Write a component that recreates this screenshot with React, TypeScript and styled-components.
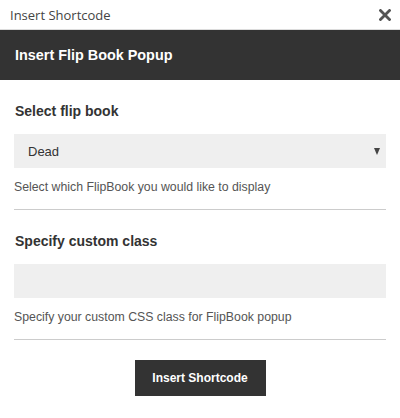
import { createGlobalStyle, styled } from 'styled-components'

const GlobalStyle = createGlobalStyle`
  html, body {
    margin: 0;
    padding: 0;
    background: #fff;
  }
  body {
    font-family: "Liberation Sans", Arial, sans-serif;
  }
`

export default function App() {
  return (
    <>
      <GlobalStyle />
      <Dialog>
        <TitleBar>
          <TitleText>Insert Shortcode</TitleText>
          <Close aria-label="Close">
            <svg width="12" height="12" viewBox="0 0 12 12">
              <path
                d="M1.5 1.5 L10.5 10.5 M10.5 1.5 L1.5 10.5"
                stroke="#555"
                strokeWidth="2.8"
                strokeLinecap="square"
              />
            </svg>
          </Close>
        </TitleBar>
        <Header>Insert Flip Book Popup</Header>
        <Body>
          <Field>
            <Label>Select flip book</Label>
            <SelectBox>
              <span>Dead</span>
              <Arrow />
            </SelectBox>
            <Help>Select which FlipBook you would like to display</Help>
          </Field>
          <Sep />
          <Field>
            <Label>Specify custom class</Label>
            <TextInput type="text" />
            <Help>Specify your custom CSS class for FlipBook popup</Help>
          </Field>
          <Sep $after={20} />
          <Actions>
            <Submit type="button">Insert Shortcode</Submit>
          </Actions>
        </Body>
      </Dialog>
    </>
  )
}

const Dialog = styled.div`
  width: 400px;
  height: 418px;
  background: #fff;
  display: flex;
  flex-direction: column;
`
const TitleBar = styled.div`
  height: 29px;
  border-bottom: 1px solid #dcdcdc;
  display: flex;
  align-items: center;
  justify-content: space-between;
  padding: 0 9px 0 10px;
`
const TitleText = styled.span`
  font-family: "Open Sans", "Noto Sans", sans-serif;
  font-size: 13px;
  color: #444;
`
const Close = styled.span`
  display: flex;
  align-items: center;
`
const Header = styled.div`
  height: 50px;
  background: #333;
  color: #fff;
  font-weight: bold;
  font-size: 14.4px;
  display: flex;
  align-items: center;
  padding: 0 15px;
`
const Body = styled.div`
  padding: 21px 14px 0;
  display: flex;
  flex-direction: column;
`
const Field = styled.div`
  display: flex;
  flex-direction: column;
`
const Label = styled.div`
  font-size: 14px;
  line-height: 20px;
  font-weight: bold;
  color: #333;
  padding-left: 1px;
  margin-bottom: 13px;
`
const SelectBox = styled.div`
  height: 34px;
  background: #efefef;
  display: flex;
  align-items: center;
  justify-content: space-between;
  padding: 0 6px 0 14px;
  font-size: 13px;
  color: #333;
`
const Arrow = styled.span`
  width: 0;
  height: 0;
  border-left: 3.5px solid transparent;
  border-right: 3.5px solid transparent;
  border-top: 7px solid #444;
`
const TextInput = styled.input`
  height: 34px;
  box-sizing: border-box;
  border: none;
  outline: none;
  background: #efefef;
  margin: 0;
  padding: 0 14px;
  font-family: inherit;
  font-size: 13px;
`
const Help = styled.div`
  font-size: 12.3px;
  line-height: 16px;
  color: #555;
  margin-top: 11px;
`
const Sep = styled.hr<{ $after?: number }>`
  border: none;
  border-top: 1px solid #ccc;
  margin: 14px 0 ${(p) => p.$after ?? 21}px;
  width: 100%;
`
const Actions = styled.div`
  display: flex;
  justify-content: center;
`
const Submit = styled.button`
  width: 131px;
  height: 36px;
  background: #333;
  color: #fff;
  border: none;
  font-family: "Liberation Sans", Arial, sans-serif;
  font-weight: bold;
  font-size: 12px;
  cursor: pointer;
`
